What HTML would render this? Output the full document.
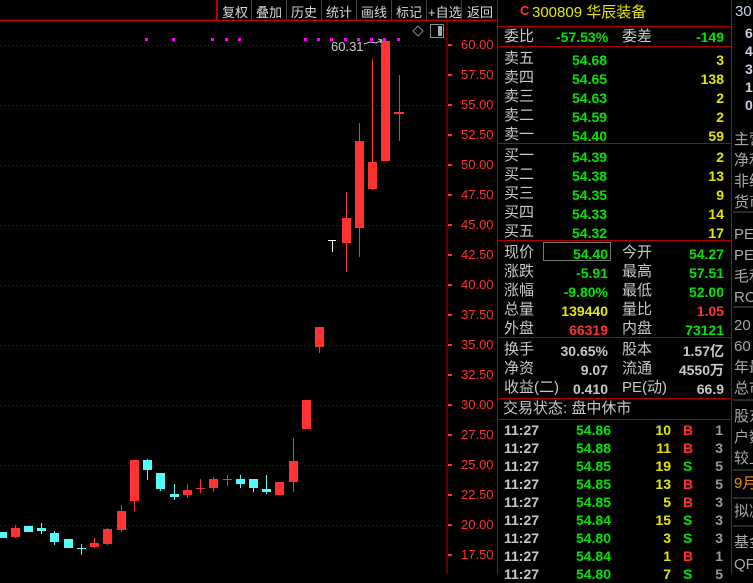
<!DOCTYPE html>
<html><head><meta charset="utf-8"><style>
body{margin:0;width:753px;height:574px;background:#000;overflow:hidden;position:relative;font-family:"Liberation Sans","Noto Sans CJK SC",sans-serif}
.a{position:absolute;white-space:nowrap;line-height:1}
.cj{font-size:15px;color:#c8c8c8}
.n{font-size:14px;font-weight:bold}
.g{color:#00e600}.y{color:#e6e600}.r{color:#ff3232}.w{color:#c8c8c8}
.rt{text-align:right}
.hl{position:absolute;left:497px;width:234px;height:1px;background:#b00000}
.tb{position:absolute;top:2px;font-size:13px;color:#d8d8d8}
.ax{position:absolute;left:461px;font-size:13px;line-height:14px;color:#ff3232}
</style></head><body>
<svg width="753" height="574" style="position:absolute;left:0;top:0">
<g stroke="#6a1010" stroke-dasharray="1 3" stroke-width="1">
<line x1="0" y1="45.5" x2="446" y2="45.5"/><line x1="0" y1="105.5" x2="446" y2="105.5"/><line x1="0" y1="165.5" x2="446" y2="165.5"/><line x1="0" y1="225.5" x2="446" y2="225.5"/><line x1="0" y1="285.5" x2="446" y2="285.5"/><line x1="0" y1="345.5" x2="446" y2="345.5"/><line x1="0" y1="405.5" x2="446" y2="405.5"/><line x1="0" y1="465.5" x2="446" y2="465.5"/><line x1="0" y1="525.5" x2="446" y2="525.5"/>
</g>
<line x1="0" y1="20.5" x2="497" y2="20.5" stroke="#c00000" stroke-width="1.5"/>
<line x1="447" y1="20" x2="447" y2="574" stroke="#c00000"/>
<line x1="497.5" y1="0" x2="497.5" y2="574" stroke="#c00000"/>
<line x1="731.5" y1="0" x2="731.5" y2="574" stroke="#c00000"/>
<rect x="216" y="0" width="2" height="20" fill="#c00000"/>
<g stroke="#444"><line x1="251.5" y1="0" x2="251.5" y2="20"/><line x1="286.5" y1="0" x2="286.5" y2="20"/><line x1="321.5" y1="0" x2="321.5" y2="20"/><line x1="356.5" y1="0" x2="356.5" y2="20"/><line x1="391.5" y1="0" x2="391.5" y2="20"/><line x1="426.5" y1="0" x2="426.5" y2="20"/><line x1="461.5" y1="0" x2="461.5" y2="20"/></g>
<g stroke="#ff3232" stroke-width="2"><line x1="448" y1="45" x2="452" y2="45"/><line x1="448" y1="75" x2="452" y2="75"/><line x1="448" y1="105" x2="452" y2="105"/><line x1="448" y1="135" x2="452" y2="135"/><line x1="448" y1="165" x2="452" y2="165"/><line x1="448" y1="195" x2="452" y2="195"/><line x1="448" y1="225" x2="452" y2="225"/><line x1="448" y1="255" x2="452" y2="255"/><line x1="448" y1="285" x2="452" y2="285"/><line x1="448" y1="315" x2="452" y2="315"/><line x1="448" y1="345" x2="452" y2="345"/><line x1="448" y1="375" x2="452" y2="375"/><line x1="448" y1="405" x2="452" y2="405"/><line x1="448" y1="435" x2="452" y2="435"/><line x1="448" y1="465" x2="452" y2="465"/><line x1="448" y1="495" x2="452" y2="495"/><line x1="448" y1="525" x2="452" y2="525"/><line x1="448" y1="555" x2="452" y2="555"/></g>
<g fill="#ff00ff"><rect x="145" y="38" width="3" height="3"/><rect x="172" y="38" width="3" height="3"/><rect x="211" y="38" width="3" height="3"/><rect x="225" y="38" width="3" height="3"/><rect x="238" y="38" width="3" height="3"/><rect x="304" y="38" width="3" height="3"/><rect x="317" y="38" width="3" height="3"/><rect x="330" y="38" width="3" height="3"/><rect x="344" y="38" width="3" height="3"/><rect x="357" y="38" width="3" height="3"/><rect x="370" y="38" width="3" height="3"/><rect x="383" y="38" width="3" height="3"/><rect x="397" y="38" width="3" height="3"/></g>
<g fill="#ff3232" stroke="#ff3232">
<line x1="15.5" y1="525" x2="15.5" y2="538"/><rect x="11" y="528" width="9" height="9" stroke="none"/>
<line x1="94.5" y1="538" x2="94.5" y2="548"/><rect x="90" y="543" width="9" height="4" stroke="none"/>
<line x1="107.5" y1="528" x2="107.5" y2="545"/><rect x="103" y="529" width="9" height="15" stroke="none"/>
<line x1="121.5" y1="505" x2="121.5" y2="532"/><rect x="117" y="511" width="9" height="19" stroke="none"/>
<line x1="134.5" y1="460" x2="134.5" y2="511"/><rect x="130" y="460" width="9" height="41" stroke="none"/>
<line x1="187.5" y1="484" x2="187.5" y2="498"/><rect x="183" y="490" width="9" height="5" stroke="none"/>
<line x1="200.5" y1="479" x2="200.5" y2="493"/><line x1="196" y1="488.5" x2="205" y2="488.5"/>
<line x1="213.5" y1="477" x2="213.5" y2="492"/><rect x="209" y="479" width="9" height="9" stroke="none"/>
<line x1="227.5" y1="475" x2="227.5" y2="486"/><line x1="223" y1="479.5" x2="232" y2="479.5"/>
<rect x="275" y="482" width="9" height="13" stroke="none"/>
<line x1="293.5" y1="438" x2="293.5" y2="492"/><rect x="289" y="461" width="9" height="21" stroke="none"/>
<rect x="302" y="400" width="9" height="29" stroke="none"/>
<line x1="319.5" y1="327" x2="319.5" y2="353"/><rect x="315" y="327" width="9" height="20" stroke="none"/>
<line x1="346.5" y1="192" x2="346.5" y2="272"/><rect x="342" y="218" width="9" height="25" stroke="none"/>
<line x1="359.5" y1="123" x2="359.5" y2="257"/><rect x="355" y="141" width="9" height="87" stroke="none"/>
<line x1="372.5" y1="59" x2="372.5" y2="190"/><rect x="368" y="162" width="9" height="27" stroke="none"/>
<rect x="381" y="41" width="9" height="120" stroke="none"/>
<line x1="399.5" y1="75" x2="399.5" y2="141"/><rect x="394" y="112" width="10" height="2" stroke="none"/>
</g>
<g fill="#54fcfc" stroke="#54fcfc">
<rect x="0" y="532" width="7" height="6" stroke="none"/>
<rect x="24" y="526" width="9" height="6" stroke="none"/>
<line x1="41.5" y1="523" x2="41.5" y2="534"/><rect x="37" y="528" width="9" height="3" stroke="none"/>
<line x1="54.5" y1="531" x2="54.5" y2="545"/><rect x="50" y="533" width="9" height="9" stroke="none"/>
<rect x="64" y="539" width="9" height="9" stroke="none"/>
<line x1="81.5" y1="544" x2="81.5" y2="555"/><line x1="77" y1="548.5" x2="86" y2="548.5"/>
<line x1="147.5" y1="459" x2="147.5" y2="480"/><rect x="143" y="460" width="9" height="10" stroke="none"/>
<line x1="160.5" y1="473" x2="160.5" y2="491"/><rect x="156" y="473" width="9" height="16" stroke="none"/>
<line x1="174.5" y1="484" x2="174.5" y2="500"/><rect x="170" y="494" width="9" height="3" stroke="none"/>
<line x1="240.5" y1="475" x2="240.5" y2="488"/><rect x="236" y="479" width="9" height="5" stroke="none"/>
<line x1="253.5" y1="479" x2="253.5" y2="492"/><rect x="249" y="479" width="9" height="9" stroke="none"/>
<line x1="266.5" y1="475" x2="266.5" y2="494"/><rect x="262" y="489" width="9" height="3" stroke="none"/>
</g>
<g stroke="#fff" fill="none"><line x1="328" y1="240.5" x2="336" y2="240.5"/><line x1="332.5" y1="240" x2="332.5" y2="252"/>
<path d="M364 44 L370 42 L376 43 L382 40 M378 39 L382 40 L380 43" stroke="#ccc"/>
<path d="M418 26 L423 31 L418 36 L413 31 Z" stroke="#888"/>
<rect x="430.5" y="24.5" width="13" height="13" stroke="#888"/></g>
<rect x="438" y="26" width="4" height="10" fill="#aaa"/>
<g stroke="#555"><line x1="733" y1="212" x2="753" y2="212"/><line x1="733" y1="307" x2="753" y2="307"/><line x1="733" y1="400" x2="753" y2="400"/><line x1="733" y1="470" x2="753" y2="470"/><line x1="733" y1="498" x2="753" y2="498"/><line x1="733" y1="526" x2="753" y2="526"/></g>
</svg>
<div class="tb" style="left:222px">复权</div><div class="tb" style="left:256px">叠加</div><div class="tb" style="left:291px">历史</div><div class="tb" style="left:326px">统计</div><div class="tb" style="left:361px">画线</div><div class="tb" style="left:396px">标记</div><div class="tb" style="left:428px">+自选</div><div class="tb" style="left:467px">返回</div>
<div class="a" style="left:331px;top:40px;font-size:13px;color:#ccc">60.31</div>
<div class="ax" style="top:38px">60.00</div><div class="ax" style="top:68px">57.50</div><div class="ax" style="top:98px">55.00</div><div class="ax" style="top:128px">52.50</div><div class="ax" style="top:158px">50.00</div><div class="ax" style="top:188px">47.50</div><div class="ax" style="top:218px">45.00</div><div class="ax" style="top:248px">42.50</div><div class="ax" style="top:278px">40.00</div><div class="ax" style="top:308px">37.50</div><div class="ax" style="top:338px">35.00</div><div class="ax" style="top:368px">32.50</div><div class="ax" style="top:398px">30.00</div><div class="ax" style="top:428px">27.50</div><div class="ax" style="top:458px">25.00</div><div class="ax" style="top:488px">22.50</div><div class="ax" style="top:518px">20.00</div><div class="ax" style="top:548px">17.50</div>
<div class="hl" style="top:26px"></div><div class="hl" style="top:46px"></div><div class="hl" style="top:143px"></div><div class="hl" style="top:240px"></div><div class="hl" style="top:337px"></div><div class="hl" style="top:398px"></div><div class="hl" style="top:419px"></div>
<div class="a r" style="left:520px;top:4px;font-size:13px;font-weight:bold">C</div>
<div class="a y" style="left:532px;top:5px;font-size:15px">300809 华辰装备</div>
<div class="a cj" style="left:504px;top:29px">委比</div><div class="a n g" style="left:556px;top:30px">-57.53%</div><div class="a cj" style="left:622px;top:29px">委差</div><div class="a n g rt" style="right:29px;top:30px">-149</div>
<div class="a cj" style="left:504px;top:49px;line-height:19px">卖五<br>卖四<br>卖三<br>卖二<br>卖一</div>
<div class="a n g" style="left:572px;top:51px;line-height:19px">54.68<br>54.65<br>54.63<br>54.59<br>54.40</div>
<div class="a n y rt" style="right:29px;top:51px;line-height:19px">3<br>138<br>2<br>2<br>59</div>
<div class="a cj" style="left:504px;top:146px;line-height:19px">买一<br>买二<br>买三<br>买四<br>买五</div>
<div class="a n g" style="left:572px;top:148px;line-height:19px">54.39<br>54.38<br>54.35<br>54.33<br>54.32</div>
<div class="a n y rt" style="right:29px;top:148px;line-height:19px">2<br>13<br>9<br>14<br>17</div>
<div class="a" style="left:543px;top:242px;width:66px;height:17px;border:1px solid #777"></div>
<div class="a cj" style="left:504px;top:243px;line-height:19px">现价<br>涨跌<br>涨幅<br>总量<br>外盘</div>
<div class="a n rt" style="right:145px;top:245px;line-height:19px"><span class="g">54.40</span><br><span class="g">-5.91</span><br><span class="g">-9.80%</span><br><span class="y">139440</span><br><span class="r">66319</span></div>
<div class="a cj" style="left:622px;top:243px;line-height:19px">今开<br>最高<br>最低<br>量比<br>内盘</div>
<div class="a n rt" style="right:29px;top:245px;line-height:19px"><span class="g">54.27</span><br><span class="g">57.51</span><br><span class="g">52.00</span><br><span class="r">1.05</span><br><span class="g">73121</span></div>
<div class="a cj" style="left:504px;top:340px;line-height:19px">换手<br>净资<br>收益(二)</div>
<div class="a n w rt" style="right:145px;top:342px;line-height:19px">30.65%<br>9.07<br>0.410</div>
<div class="a cj" style="left:622px;top:340px;line-height:19px">股本<br>流通<br>PE(动)</div>
<div class="a n w rt" style="right:29px;top:342px;line-height:19px">1.57亿<br>4550万<br>66.9</div>
<div class="a cj" style="left:503px;top:401px">交易状态: 盘中休市</div>
<div class="a n w" style="left:504px;top:421px;line-height:18px">11:27<br>11:27<br>11:27<br>11:27<br>11:27<br>11:27<br>11:27<br>11:27<br>11:27</div>
<div class="a n g rt" style="right:142px;top:421px;line-height:18px">54.86<br>54.88<br>54.85<br>54.85<br>54.85<br>54.84<br>54.80<br>54.84<br>54.80</div>
<div class="a n y rt" style="right:82px;top:421px;line-height:18px">10<br>11<br>19<br>13<br>5<br>15<br>3<br>1<br>7</div>
<div class="a n" style="left:683px;top:421px;line-height:18px"><span class="r">B</span><br><span class="r">B</span><br><span class="g">S</span><br><span class="r">B</span><br><span class="r">B</span><br><span class="g">S</span><br><span class="g">S</span><br><span class="r">B</span><br><span class="g">S</span></div>
<div class="a n rt" style="right:30px;top:421px;line-height:18px;color:#999">1<br>3<br>5<br>5<br>3<br>3<br>3<br>1<br>5</div>
<div class="a" style="left:735px;top:4px;font-size:15px;color:#c8d0e0">30</div>
<div class="a n" style="left:745px;top:24px;line-height:18px;color:#c8d0e0">6<br>4<br>3<br>1<br>0</div>
<div class="a cj" style="left:734px;top:129px;line-height:21px;color:#aaa">主营<br>净利<br>非经<br>货币</div>
<div class="a cj" style="left:734px;top:224px;line-height:21px;color:#aaa">PE<br>PE<br>毛利<br>RO</div>
<div class="a cj" style="left:734px;top:315px;line-height:21px;color:#aaa">20<br>60<br>年最<br>总市</div>
<div class="a cj" style="left:734px;top:406px;line-height:21px;color:#aaa">股东<br>户数<br>较上</div>
<div class="a cj" style="left:734px;top:476px;color:#ff8c00">9月</div>
<div class="a cj" style="left:734px;top:504px;color:#aaa">拟减</div>
<div class="a cj" style="left:734px;top:532px;line-height:22px;color:#aaa">基金<br>QF</div>
</body></html>
